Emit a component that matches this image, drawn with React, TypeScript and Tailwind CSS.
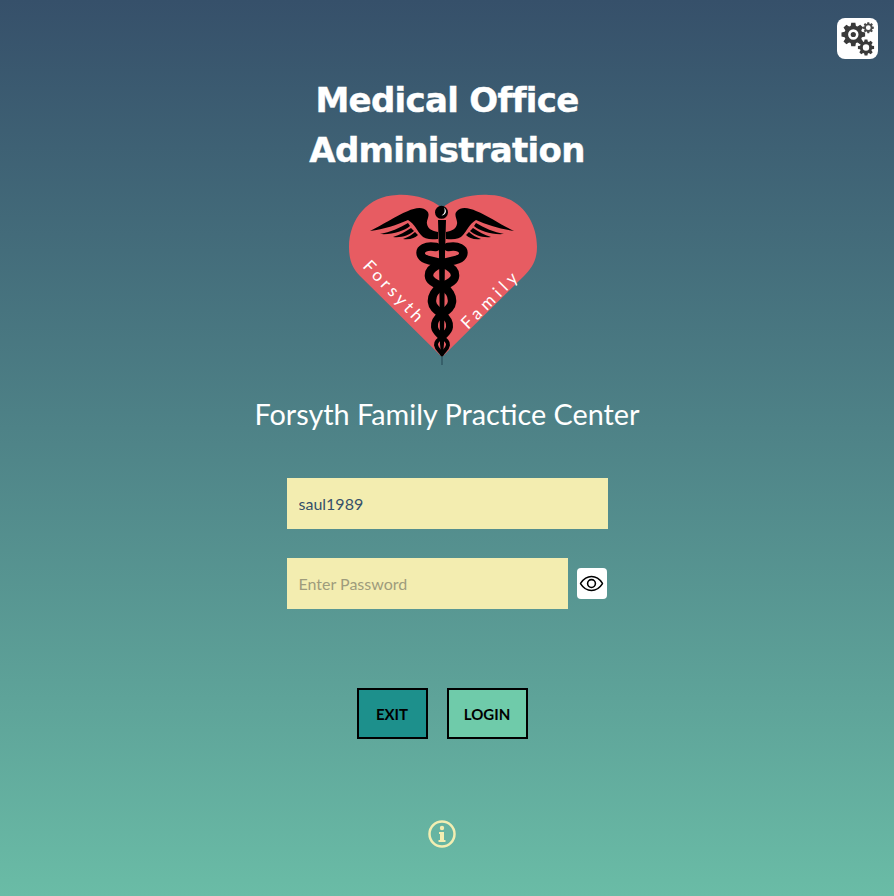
import { IoEyeOutline } from 'react-icons/io5'

// builds a toothed ring, hole cut out with evenodd
const gearPath = (cx: number, cy: number, outer: number, root: number, hole: number, teeth: number) => {
  const pts: string[] = []
  const step = (Math.PI * 2) / teeth
  for (let i = 0; i < teeth; i++) {
    const a = i * step - Math.PI / 2
    const p = (r: number, t: number) =>
      `${(cx + r * Math.cos(a + t * step)).toFixed(2)} ${(cy + r * Math.sin(a + t * step)).toFixed(2)}`
    pts.push(p(root, -0.38), p(outer, -0.22), p(outer, 0.22), p(root, 0.38))
  }
  const ring = `M${cx - hole} ${cy} a${hole} ${hole} 0 1 0 ${hole * 2} 0 a${hole} ${hole} 0 1 0 ${-hole * 2} 0 Z`
  return `M${pts.join(' L')} Z ${ring}`
}

const GearsIcon = () => (
  <svg width="41" height="41" viewBox="837 18 41 41" className="block">
    <path d={gearPath(853.3, 34.5, 12, 9, 5.2, 8)} fill="#3a3a3a" fillRule="evenodd" />
    <circle cx="853.3" cy="34.5" r="2.6" fill="#3a3a3a" />
    <path d={gearPath(868.3, 27.7, 5.6, 4.2, 2.4, 8)} fill="#4a4a4a" fillRule="evenodd" />
    <path d={gearPath(866, 47.5, 8.2, 6.2, 3.2, 8)} fill="#3a3a3a" fillRule="evenodd" />
  </svg>
)

const wing = (
  <g fill="#000">
    <path d="M370 232 C383 226 395 217 408 212 C414 209 423 207 427 212 C431 216 426 221 427 225 C428 230 432 232 438 233 L438 240 C430 241 424 240 421 236 C417 232 415 225 408 221 C397 226 384 230 370 232 Z" />
    <path d="M408 224 C400 229 390 233 380 235 C392 236 404 232 410 227 Z" />
    <path d="M411 229 C405 233 400 236 393 238 C402 239 409 236 414 232 Z" />
    <path d="M415 233 C412 236 408 238 403 240 C410 241 415 239 418 236 Z" />
  </g>
)

const snakeTop =
  'M436 248 C426 246 419 250 421 256 C423 262 436 262 444 265 C451 268 455.5 272 455 277 C454.5 283 447 285 441 288 C435 291 431.5 297 432 303 C432.5 309 438 312 443 316'
const snakeMid = 'M443 316 C448 319 450 324 449.5 328 C449 333 445 335 442 338'
const snakeTail = 'M442 338 C438 341 435.5 343 436 346 C436.5 350 440 352 442 355'

const snake = (
  <>
    <path d={snakeTop} strokeWidth="8.5" />
    <path d={snakeMid} strokeWidth="7" />
    <path d={snakeTail} strokeWidth="4" />
  </>
)

const HeartLogo = () => (
  <svg width="225" height="190" viewBox="330 185 225 190" className="block">
    <path
      d="M442 209 C431 200 414 195 397 196 C368 197 349 220 349 248 C349 262 353 270 360 277 L442 358 L524 277 C531 270 537 262 537 248 C537 220 518 196 489 196 C470 195 453 200 442 209 Z"
      fill="#e75c62"
    />
    {wing}
    <g transform="translate(884 0) scale(-1 1)">{wing}</g>
    {/* staff */}
    <path d="M438 221 L446 221 L445 255 L444 345 L442.6 358 L441.4 358 L440 345 L439 255 Z" fill="#000" />
    <path d="M441.3 356 H442.7 V366 H441.3 Z" fill="#2f5560" />
    <circle cx="441.5" cy="213.3" r="6.5" fill="#000" />
    <path d="M444 208.5 C447.5 211.5 446 216 441.5 216.5 C444.5 215 445.5 212 444 208.5 Z" fill="#fff" />
    {/* snakes, mirrored over the staff */}
    <g fill="none" stroke="#000" strokeLinecap="round">
      <g transform="translate(884 0) scale(-1 1)">{snake}</g>
      {snake}
    </g>
    {/* lettering */}
    <text
      transform="translate(362 268) rotate(46)"
      fill="#fff"
      fontFamily="Lato, sans-serif"
      fontSize="17"
      letterSpacing="3.6"
    >
      Forsyth
    </text>
    <text
      transform="translate(468 331) rotate(-45)"
      fill="#fff"
      fontFamily="Lato, sans-serif"
      fontSize="17"
      letterSpacing="4.8"
    >
      Family
    </text>
  </svg>
)

const InfoIcon = () => (
  <svg width="28" height="28" viewBox="0 0 28 28" className="block">
    <circle cx="14" cy="14" r="12.5" fill="none" stroke="#f3eeb2" strokeWidth="2.5" />
    <circle cx="14" cy="8" r="2.2" fill="#f3eeb2" />
    <path d="M11 12 H16 V20 H17.5 V22 H10.5 V20 H12 V14 H11 Z" fill="#f3eeb2" />
  </svg>
)

export default function App() {
  return (
    <div className="relative flex h-[896px] flex-col items-center bg-gradient-to-b from-[#36506a] to-[#6abca6] font-['Lato',sans-serif]">
      <button className="absolute right-4 top-[18px] h-[41px] w-[41px] overflow-hidden rounded-lg bg-white">
        <GearsIcon />
      </button>

      <h1 className="mt-[75px] w-[400px] text-center font-['DejaVu_Sans',sans-serif] text-[34px] font-bold leading-[50px] tracking-[-0.7px] text-white [-webkit-text-stroke:0.4px_white]">
        Medical Office Administration
      </h1>

      <div className="mr-[10px] mt-[9px]">
        <HeartLogo />
      </div>

      <p className="mt-[20px] text-[28.8px] leading-[40px] text-white">Forsyth Family Practice Center</p>

      <div className="mt-[44px] flex w-[321px] flex-col gap-[29px]">
        <input
          defaultValue="saul1989"
          className="h-[51px] w-full bg-[#f3edb0] px-3 text-base text-[#36506a] outline-none"
        />
        <div className="flex items-center gap-[9px]">
          <input
            placeholder="Enter Password"
            className="h-[51px] w-[281px] bg-[#f3edb0] px-3 text-base text-[#36506a] outline-none placeholder:text-[#9e9c7c]"
          />
          <button className="flex h-[31px] w-[30px] items-center justify-center rounded bg-white text-black">
            <IoEyeOutline size={25} />
          </button>
        </div>
      </div>

      <div className="mr-[10px] mt-[79px] flex gap-[19px]">
        <button className="h-[51px] w-[71px] border-2 border-black bg-[#1d908c] pt-px text-[15px] font-bold text-black">
          EXIT
        </button>
        <button className="h-[51px] w-[81px] border-2 border-black bg-[#6fcbaa] pt-px text-[15px] font-bold text-black">
          LOGIN
        </button>
      </div>

      <div className="mr-[10px] mt-[81px]">
        <InfoIcon />
      </div>
    </div>
  )
}
